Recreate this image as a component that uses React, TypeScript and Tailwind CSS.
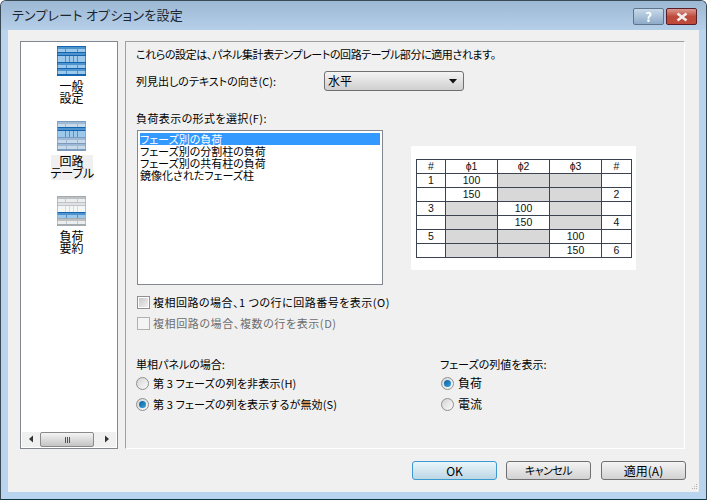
const font = "[font-family:'Noto_Sans_CJK_JP','Liberation_Sans',sans-serif] [font-feature-settings:'palt']"

const blue = { line: '#1565b0', band: '#4f93cc', row: '#9cc8ec' }
const muted = { line: '#7c9cc0', band: '#9db9d6', row: '#c8d9ea' }
const gray = { line: '#a6aaae', band: '#bcc0c4', row: '#eceeef' }
const pale = { line: '#c0c4c8', band: '#e0e2e4', row: '#f4f5f6' }

type Palette = typeof blue

const navItems = [
  { label: '一般\n設定', colors: [blue, blue, blue, blue] },
  { label: '回路\nテーブル', colors: [muted, blue, muted, muted], selected: true },
  { label: '負荷\n要約', colors: [gray, pale, blue, gray] },
]

const tableRows = [
  ['1', '100', 'x', 'x', ''],
  ['', '150', 'x', 'x', '2'],
  ['3', 'x', '100', 'x', ''],
  ['', 'x', '150', 'x', '4'],
  ['5', 'x', 'x', '100', ''],
  ['', 'x', 'x', '150', '6'],
]

function Band({ y, p, rowY, rowH, dividers }: { y: number; p: Palette; rowY: number; rowH: number; dividers: number[] }) {
  return (
    <>
      <rect x="0" y={y} width="29" height="1" fill={p.line} />
      <rect x="0" y={y + 1} width="29" height={rowY - y - 1} fill={p.band} />
      <rect x="0" y={rowY} width="29" height={rowH} fill={p.row} />
      {dividers.map((d) => (
        <rect key={d} x={d} y={rowY} width="1" height={rowH} fill={p.line} opacity="0.55" />
      ))}
    </>
  )
}

function TableIcon({ colors }: { colors: Palette[] }) {
  const [a, b, c, d] = colors
  return (
    <svg width="29" height="30" viewBox="0 0 29 30" className="block">
      <Band y={0} p={a} rowY={3} rowH={3} dividers={[8, 20]} />
      <Band y={6} p={b} rowY={10} rowH={6} dividers={[8, 12, 16, 20]} />
      <rect x="0" y="9" width="29" height="1" fill={b.line} />
      <Band y={16} p={c} rowY={19} rowH={3} dividers={[9, 20]} />
      <Band y={22} p={d} rowY={25} rowH={3} dividers={[9, 20]} />
      <rect x="0" y="28" width="29" height="2" fill={d.line} />
      <path d="M.5 0v30M28.5 0v30" stroke={a.line} strokeWidth="1" opacity="0.7" />
    </svg>
  )
}

function Radio({ checked }: { checked?: boolean }) {
  return (
    <span className="w-[13px] h-[13px] rounded-full border border-[#8e8f8f] bg-gradient-to-br from-[#d4d4d4] to-[#fbfbfb] flex items-center justify-center shrink-0">
      {checked && <span className="w-[7px] h-[7px] rounded-full bg-gradient-to-br from-[#0b5f9e] to-[#37a3e0]" />}
    </span>
  )
}

function Check({ disabled }: { disabled?: boolean }) {
  return (
    <span className={`w-[13px] h-[13px] border flex items-center justify-center shrink-0 ${disabled ? 'border-[#b1b1b1] bg-[#f4f4f4]' : 'border-[#8e8f8f] bg-white'}`}>
      {!disabled && <span className="w-[9px] h-[9px] bg-gradient-to-br from-[#c8c8c8] to-[#f0f0f0]" />}
    </span>
  )
}

function Button({ label, primary, className }: { label: string; primary?: boolean; className?: string }) {
  return (
    <button className={`w-[85px] h-[19px] rounded-[3px] border leading-none text-black ${primary ? 'border-[#3c9ad0] bg-gradient-to-b from-[#eaf6fb] to-[#bcd6e4]' : 'border-[#707070] bg-gradient-to-b from-[#f4f4f4] to-[#d2d2d2]'} ${className ?? ''}`}>
      {label}
    </button>
  )
}

export default function App() {
  return (
    <div className={`${font} w-[707px] h-[500px] overflow-hidden flex flex-col text-[11px] leading-[12px] text-black bg-[#b9d4ee] rounded-t-[6px] border border-[#3a4a55] border-b-[#12383f]`}>
      <div className="h-[29px] shrink-0 flex items-center pl-[11px] pr-[9px] bg-gradient-to-b from-[#9db8d3] to-[#b5cfe9]">
        <span className="text-[13px] tracking-[0.25px] text-[#1c2530] mt-[-2px]">テンプレート オプションを設定</span>
        <div className="ml-auto flex gap-[2px] mt-[7px] self-start">
          <div className="w-[31px] h-[17px] rounded-[2px] border border-[#5f7488] bg-gradient-to-b from-[#c8d9ea] to-[#8fabc8] flex items-center justify-center text-white font-bold text-[13px]">?</div>
          <div className="w-[31px] h-[17px] rounded-[2px] border border-[#5a1c28] bg-gradient-to-b from-[#d99a90] via-[#bd4a3c] to-[#c0493a] flex items-center justify-center">
            <svg width="14" height="10" viewBox="0 0 14 10">
              <path d="M2.5 1.5l9 7M11.5 1.5l-9 7" stroke="#f2eeee" strokeWidth="2.6" />
            </svg>
          </div>
        </div>
      </div>

      <div className="flex-1 mx-[7px] mb-[7px] bg-[#f0f0f0] flex flex-col pt-[11px] pl-[12px] relative">
        <div className="flex gap-[7px] h-[408px]">
          <div className="w-[98px] h-[408px] border border-[#828790] bg-white flex flex-col">
            <div className="flex-1 flex flex-col items-center pt-[4px] pl-[5px]">
              {navItems.map((item) => (
                <div key={item.label} className="h-[75px] flex flex-col items-center">
                  <TableIcon colors={item.colors} />
                  <div className={`mt-[4px] w-[42px] h-[25px] text-center text-[12px] whitespace-pre ${item.selected ? 'bg-[#f0f0f0]' : ''}`}>
                    {item.label}
                  </div>
                </div>
              ))}
            </div>
            <div className="h-[15px] mx-[1px] mb-[1px] bg-[#f0f0f0] flex items-center">
              <svg width="18" height="15" viewBox="0 0 18 15"><path d="M11 3.5v7l-4-3.5z" fill="#333" /></svg>
              <div className="w-[54px] h-[15px] rounded-[2px] border border-[#8a8a8a] bg-gradient-to-b from-[#f4f4f4] to-[#c4c4c4] flex items-center justify-center gap-[1px]">
                <span className="w-[1px] h-[6px] bg-[#555]" />
                <span className="w-[1px] h-[6px] bg-[#555]" />
                <span className="w-[1px] h-[6px] bg-[#555]" />
              </div>
              <svg width="20" height="15" viewBox="0 0 20 15" className="ml-auto"><path d="M9 3.5v7l4-3.5z" fill="#333" /></svg>
            </div>
          </div>

          <div className="w-[560px] h-[408px] border-l border-t border-r border-b border-l-[#a0a0a0] border-t-[#a0a0a0] border-r-white border-b-white pl-[10px]">
            <div className="h-[24px] flex items-center whitespace-nowrap tracking-[-0.4px]">これらの設定は、パネル集計表テンプレートの回路テーブル部分に適用されます。</div>

            <div className="mt-[5px] h-[20px] flex items-center">
              <span className="w-[188px] whitespace-nowrap">列見出しのテキストの向き(C):</span>
              <div className="w-[140px] h-[20px] rounded-[3px] border border-[#707070] bg-gradient-to-b from-[#f4f4f4] to-[#cfcfcf] flex items-center pl-[3px] pr-[6px] text-[12px]">
                <span>水平</span>
                <svg width="8" height="5" viewBox="0 0 8 5" className="ml-auto"><path d="M0 0h8l-4 4.5z" fill="#111" /></svg>
              </div>
            </div>

            <div className="mt-[19px] h-[16px] flex items-center tracking-[0.4px]">負荷表示の形式を選択(F):</div>

            <div className="mt-[4px] h-[155px] flex items-start">
              <div className="ml-[1px] w-[246px] h-[155px] border border-[#828790] bg-white p-[2px]">
                <div className="h-[12px] whitespace-nowrap bg-[#3399ff] text-white">フェーズ別の負荷</div>
                <div className="whitespace-pre">{'フェーズ別の分割柱の負荷\nフェーズ別の共有柱の負荷\n鏡像化されたフェーズ柱'}</div>
              </div>
              <div className="ml-[28px] mt-[16px] w-[225px] h-[124px] bg-white pt-[13px] pl-[5px]">
                <table className="border-collapse table-fixed w-[215px] [font-family:'Liberation_Sans',sans-serif] text-[10.5px] leading-[13px] text-center text-[#111]">
                  <thead>
                    <tr className="h-[14px]">
                      {['#', 'ϕ1', 'ϕ2', 'ϕ3', '#'].map((h, i) => (
                        <th key={i} className={`border border-[#3b4350] p-0 font-normal ${i === 0 ? 'w-[29px]' : i === 4 ? 'w-[30px]' : 'w-[52px]'}`}>{h}</th>
                      ))}
                    </tr>
                  </thead>
                  <tbody>
                    {tableRows.map((row, r) => (
                      <tr key={r} className="h-[14px]">
                        {row.map((c, i) => (
                          <td key={i} className={`border border-[#3b4350] p-0 ${c === 'x' ? 'bg-[#d8d8d8]' : ''}`}>{c === 'x' ? '' : c}</td>
                        ))}
                      </tr>
                    ))}
                  </tbody>
                </table>
              </div>
            </div>

            <div className="mt-[9px] h-[16px] ml-[1px] flex items-center gap-[3px] whitespace-nowrap tracking-[0.5px]">
              <Check />
              <span>複相回路の場合、1 つの行に回路番号を表示(O)</span>
            </div>
            <div className="mt-[5px] h-[16px] ml-[1px] flex items-center gap-[3px] whitespace-nowrap tracking-[0.6px] text-[#6d6d6d]">
              <Check disabled />
              <span>複相回路の場合、複数の行を表示(D)</span>
            </div>

            <div className="mt-[25px] flex">
              <div className="w-[304px]">
                <div className="h-[16px] flex items-center">単相パネルの場合:</div>
                <div className="mt-[3px] h-[16px] flex items-center gap-[4px] tracking-[0.15px]"><Radio /><span>第 3 フェーズの列を非表示(H)</span></div>
                <div className="mt-[5px] h-[16px] flex items-center gap-[4px] tracking-[0.15px]"><Radio checked /><span>第 3 フェーズの列を表示するが無効(S)</span></div>
              </div>
              <div>
                <div className="h-[16px] flex items-center">フェーズの列値を表示:</div>
                <div className="mt-[3px] h-[16px] ml-[1px] flex items-center gap-[4px] text-[12px]"><Radio checked /><span>負荷</span></div>
                <div className="mt-[5px] h-[16px] ml-[1px] flex items-center gap-[4px] text-[12px]"><Radio /><span>電流</span></div>
              </div>
            </div>
          </div>
        </div>

        <div className="mt-[12px] flex ml-[392px]">
          <Button label="OK" primary className="text-[12px]" />
          <Button label="キャンセル" className="ml-[9px] tracking-[-0.5px]" />
          <Button label="適用(A)" className="ml-[10px] text-[12px]" />
        </div>

        <svg width="8" height="8" viewBox="0 0 8 8" className="absolute right-[1px] bottom-[1px]">
          <path d="M6 1h1v1H6zM4 3h1v1H4zM6 3h1v1H6zM2 5h1v1H2zM4 5h1v1H4zM6 5h1v1H6z" fill="#b0b0b0" />
        </svg>
      </div>
    </div>
  )
}
